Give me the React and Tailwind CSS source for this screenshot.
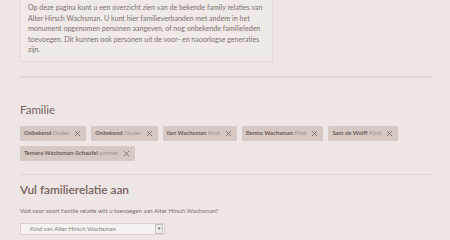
import React from "react";

const tags = [
  ["Onbekend", "Ouder"],
  ["Onbekend", "Ouder"],
  ["Ilan Wachsman", "Kind"],
  ["Benno Wachsman", "Kind"],
  ["Sam de Wolff", "Kind"],
  ["Temera Wachsman-Schaufel", "partner"],
];

function X() {
  return (
    <svg width="7" height="7" viewBox="0 0 8 8" className="ml-[5px]">
      <path d="M1 1L7 7M7 1L1 7" stroke="#7d6a64" strokeWidth="1" />
    </svg>
  );
}

export default function App() {
  return (
    <div
      className="w-[450px] h-[240px] overflow-hidden bg-[#ede6e5] text-[#7f716d]"
      style={{ fontFamily: "Lato, 'Open Sans', sans-serif" }}
    >
      <div className="pl-[20px] pr-[18px]">
        <div className="-mt-[6px] w-[253px] border border-[#e3dad9] bg-[#efe9e8] pl-[7px] pr-[2px] pt-[8px] pb-[5px] text-[7.05px] leading-[10.6px]">
          Op deze pagina kunt u een overzicht zien van de bekende family relaties van
          Alter Hirsch Wachsman. U kunt hier familieverbanden met andere in het
          monument opgenomen personen aangeven, of nog onbekende familieleden
          toevoegen. Dit kunnen ook personen uit de voor- en naoorlogse generaties
          zijn.
        </div>
        <div className="mt-[14px] h-[2px] bg-[#e2d8d7]" />
        <div className="mt-[25px] text-[11.5px] leading-[14px] text-[#76625e]">Familie</div>
        <div className="mt-[9px] flex flex-wrap gap-x-[5px] gap-y-[5px] w-[380px]">
          {tags.map(([n, r], i) => (
            <div
              key={i}
              className="h-[15px] flex items-center bg-[#d6c9c3] rounded-[1px] pl-[4px] pr-[5px] text-[5.9px]"
            >
              <span className="font-bold text-[#6e5d58]">{n}</span>
              <span className="ml-[1.5px] text-[#a09089]">{r}</span>
              <X />
            </div>
          ))}
        </div>
        <div className="mt-[13px] h-[1px] bg-[#e0d6d5]" />
        <div className="mt-[8px] text-[11.8px] leading-[14px] font-semibold text-[#76625e]">
          Vul familierelatie aan
        </div>
        <div className="mt-[10px] text-[6px] leading-[8px] text-[#7c6b67]">
          Wat voor soort familie relatie wilt u toevoegen aan Alter Hirsch Wachsman?
        </div>
        <div className="mt-[8px] w-[145px] h-[12px] flex items-center border border-[#d9d0cf] bg-[#f6f2f2]">
          <span className="flex-1 pl-[9px] text-[6px] text-[#8a7c78]">
            Kind van Alter Hirsch Wachsman
          </span>
          <span className="w-[8px] h-[10px] mr-[1px] border border-[#c8bfbe] bg-[#eeeaea] flex items-center justify-center text-[5px] text-[#666]">
            ▾
          </span>
        </div>
      </div>
    </div>
  );
}
